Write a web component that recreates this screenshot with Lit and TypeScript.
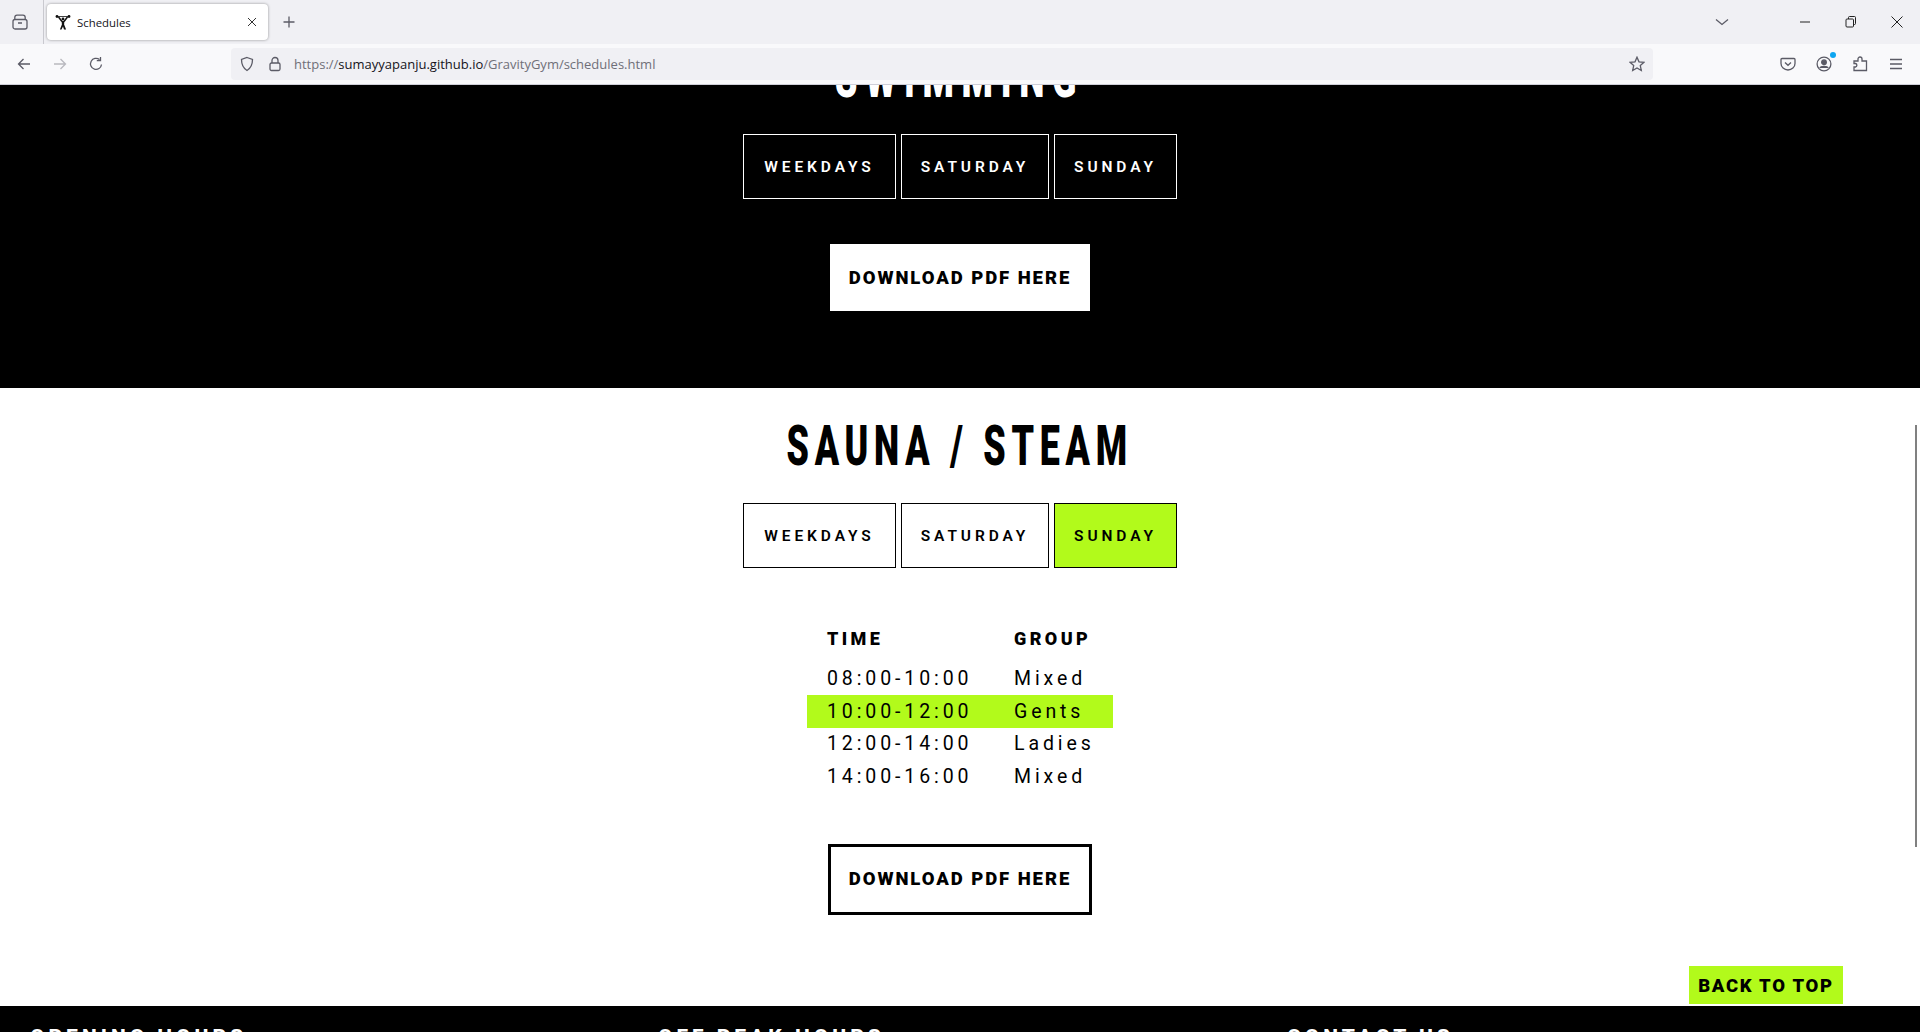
import { LitElement, html, css, svg } from "lit";
import { customElement } from "lit/decorators.js";

const ic = (w: number, body: unknown) => html`<svg width=${w} height=${w} viewBox="0 0 16 16" fill="none" stroke="#5b5b66" stroke-width="1.3">${body}</svg>`;
const win = (body: unknown) => html`<svg width="16" height="16" viewBox="0 0 16 16" stroke="#222" fill="none">${body}</svg>`;

@customElement("tab-group")
class TabGroup extends LitElement {
  static properties = { active: { type: String } };
  active = "";
  static styles = css`
    :host { display: flex; justify-content: center; gap: 5px; }
    .b { box-sizing: border-box; height: 65px; padding-top: 1px; display: flex; align-items: center; justify-content: center;
      border: 1px solid #000; font: 600 15.5px "Roboto", sans-serif; letter-spacing: 3.9px; color: #000; }
    :host([dark]) .b { border-color: #fff; color: #fff; }
    .on { background: #b2fa1b; }
  `;
  render() {
    const items: [string, number][] = [["WEEKDAYS", 153], ["SATURDAY", 148], ["SUNDAY", 123]];
    return items.map(([t, w]) => html`<div class="b ${this.active === t ? "on" : ""}" style="width:${w}px">${t}</div>`);
  }
}

@customElement("app-root")
class AppRoot extends LitElement {
  static styles = css`
    :host { display: block; width: 1920px; height: 1032px; overflow: hidden; position: relative; font-family: "Roboto", sans-serif; background: #fff; }
    svg { display: block; flex: none; }
    .tabbar { height: 44px; background: #f0f0f4; display: flex; align-items: center; }
    .side { width: 40px; padding-right: 3px; height: 44px; display: flex; justify-content: center; align-items: center; border-right: 1px solid #c9c9cf; }
    .tab { box-sizing: border-box; width: 221px; height: 36px; margin-left: 3px; background: #fff; border-radius: 4px; box-shadow: 0 0 3px rgba(0,0,0,.4);
      display: flex; align-items: center; padding: 0 8px; font: 11.4px "Open Sans", sans-serif; color: #15141a; }
    .tab span { margin-left: 6px; flex: 1; }
    .plus { margin-left: 13px; }
    .winctl { margin-left: auto; display: flex; align-items: center; }
    .chev { margin-right: 52px; }
    .wbtn { width: 46px; display: flex; justify-content: center; }
    .toolbar { height: 40px; background: #f9f9fb; display: flex; align-items: center; border-bottom: 1px solid #cfcfd8; }
    .nav { display: flex; gap: 20px; padding-left: 16px; width: 231px; box-sizing: border-box; }
    .fwd { opacity: .4; }
    .url { width: 1422px; height: 32px; background: #f0f0f4; border-radius: 4px; display: flex; align-items: center; padding: 0 8px; box-sizing: border-box; gap: 12px; }
    .addr { font: 13px "Open Sans", sans-serif; color: #6f6f78; margin-left: -1px; flex: 1; white-space: nowrap; }
    .addr b { font-weight: 400; color: #15141a; }
    .tools { display: flex; align-items: center; margin-left: 117px; }
    .tool { width: 36px; display: flex; justify-content: center; position: relative; }
    .dot { position: absolute; left: 24px; top: -4px; width: 6px; height: 6px; border-radius: 50%; background: #0da5f0; }
    .page { height: 947px; overflow: hidden; position: relative; }
    .black { background: #000; height: 303px; display: flex; flex-direction: column; align-items: center; }
    .h { font-weight: 900; font-size: 56px; letter-spacing: 9px; line-height: 64px; margin: 0; text-align: center; transform: scaleX(.64); white-space: nowrap; }
    .swim { color: #fff; margin-top: -39px; margin-bottom: -1px; letter-spacing: 12px; }
    .black tab-group { margin-top: 25px; }
    .pdf { box-sizing: border-box; display: flex; align-items: center; justify-content: center; font: 900 18.5px "Roboto", sans-serif; letter-spacing: 1.93px; color: #000; }
    .pdf-w { background: #fff; width: 260px; height: 67px; margin-top: 45px; }
    .white { display: flex; flex-direction: column; align-items: center; height: 618px; }
    .title { margin-top: 26px; }
    .white tab-group { margin-top: 25px; }
    .tbl { width: 306px; margin-top: 51px; font-size: 19.5px; letter-spacing: 3.9px; color: #000; }
    .row { display: grid; grid-template-columns: 187px 1fr; padding-left: 20px; height: 32.7px; align-items: center; }
    .hd { font-weight: 900; font-size: 18px; letter-spacing: 3.4px; height: 38px; margin-bottom: 5.2px; }
    .hl { background: #b2fa1b; }
    .pdf-b { border: 3px solid #000; width: 264px; height: 71px; margin-top: 51px; background: #fff; }
    .footer { height: 60px; background: #000; color: #fff; font-weight: 800; font-size: 21px; letter-spacing: 4px; display: grid; grid-template-columns: 628px 629px 1fr; padding-left: 30px; }
    .footer div { padding-top: 19px; }
    .top { position: absolute; left: 1689px; top: 881px; width: 154px; height: 38px; padding-top: 1px; box-sizing: border-box; background: #b2fa1b; color: #000; font: 900 18.5px "Roboto", sans-serif; letter-spacing: 1.7px; display: flex; align-items: center; justify-content: center; }
    .scroll { position: absolute; right: 3px; top: 340px; width: 2px; height: 422px; background: #808080; }
  `;
  render() {
    const rows = [["08:00-10:00", "Mixed"], ["10:00-12:00", "Gents"], ["12:00-14:00", "Ladies"], ["14:00-16:00", "Mixed"]];
    return html`
      <div class="tabbar">
        <div class="side">${ic(16, svg`<rect x="1" y="5.500" width="14" height="9.500" rx="2"/><path d="M2.800 5.500V3.500Q2.800 1.200 5 1.200H11Q13.200 1.200 13.200 3.500V5.500M6 9h4"/>`)}</div>
        <div class="tab">
          <svg width="16" height="16" viewBox="0 0 16 16" fill="#111"><path d="M2 2.500H14" stroke="#111" stroke-width=".8"/><circle cx="2" cy="2.500" r="1.400"/><circle cx="14" cy="2.500" r="1.400"/><path d="M3.500 3 7 7.500M12.500 3 9 7.500" stroke="#111" stroke-width="1.500" fill="none"/><circle cx="8" cy="5" r="1.400"/><path d="M6.600 7h2.800l-.3 3.500 2 5H9L8 12.500l-1.500 3H4.900l2-5z"/></svg>
          <span>Schedules</span>
          ${ic(16, svg`<path d="M4 4l8 8M12 4l-8 8" stroke-width="1" stroke="#333"/>`)}
        </div>
        <div class="plus">${ic(16, svg`<path d="M8 2.500v11M2.500 8h11"/>`)}</div>
        <div class="winctl">
          <div class="chev">${ic(16, svg`<path d="M2 5.500 8 10.500 14 5.500"/>`)}</div>
          <div class="wbtn">${win(svg`<path d="M3 8h10"/>`)}</div>
          <div class="wbtn">${win(svg`<rect x="3" y="5" width="7.500" height="8" rx="1"/><path d="M5.500 5V3.500a1 1 0 0 1 1-1h5a1 1 0 0 1 1 1v6a1 1 0 0 1-1 1h-1"/>`)}</div>
          <div class="wbtn">${win(svg`<path d="M2.500 2.500l11 11M13.500 2.500l-11 11"/>`)}</div>
        </div>
      </div>
      <div class="toolbar">
        <div class="nav">
          ${ic(16, svg`<path d="M14 8H2.500M7.500 3 2.500 8l5 5"/>`)}
          <div class="fwd">${ic(16, svg`<path d="M2 8h11.500M8.500 3l5 5-5 5"/>`)}</div>
          ${ic(16, svg`<path d="M13.500 8.500A5.500 5.500 0 1 1 11.500 3.600M12.500 1v3.700H8.800"/>`)}
        </div>
        <div class="url">
          ${ic(16, svg`<path d="M8 1.500 13.500 3.500c0 5-1.500 8.500-5.500 11-4-2.500-5.500-6-5.500-11z"/>`)}
          ${ic(16, svg`<rect x="3" y="7" width="10" height="7.500" rx="1.500"/><path d="M5 7V4.500a3 3 0 0 1 6 0V7"/>`)}
          <div class="addr">https://<b>sumayyapanju.github.io</b>/GravityGym/schedules.html</div>
          ${ic(16, svg`<path d="M8 1.200 10 5.800l5 .5-3.700 3.300 1 4.900L8 12l-4.300 2.500 1-4.900L1 6.300l5-.5z"/>`)}
        </div>
        <div class="tools">
          <div class="tool">${ic(16, svg`<path d="M2 2.500h12a1 1 0 0 1 1 1v4a7 6.500 0 0 1-14 0v-4a1 1 0 0 1 1-1z"/><path d="M5 6.500l3 2.800 3-2.800"/>`)}</div>
          <div class="tool">${ic(16, svg`<circle cx="8" cy="8" r="6.900"/><circle cx="8" cy="6.200" r="2.300" fill="#5b5b66"/><path d="M3.800 12c1-2.300 7.400-2.300 8.400 0" fill="#5b5b66"/>`)}<i class="dot"></i></div>
          <div class="tool">${ic(16, svg`<path d="M6 3a2 2 0 0 1 4 0V5h4.500v9.500H2V11h1.500a1.800 1.800 0 0 0 0-3.500H2V5h4z"/>`)}</div>
          <div class="tool">${ic(16, svg`<path d="M2 3.500h12M2 8h12M2 12.500h12"/>`)}</div>
        </div>
      </div>
      <div class="page">
        <section class="black">
          <div class="h swim">SWIMMING</div>
          <tab-group dark></tab-group>
          <div class="pdf pdf-w">DOWNLOAD PDF HERE</div>
        </section>
        <section class="white">
          <h1 class="h title">SAUNA / STEAM</h1>
          <tab-group active="SUNDAY"></tab-group>
          <div class="tbl">
            <div class="row hd"><span>TIME</span><span>GROUP</span></div>
            ${rows.map(([a, b], i) => html`<div class="row ${i === 1 ? "hl" : ""}"><span>${a}</span><span>${b}</span></div>`)}
          </div>
          <div class="pdf pdf-b">DOWNLOAD PDF HERE</div>
        </section>
        <footer class="footer"><div>OPENING HOURS</div><div>OFF PEAK HOURS</div><div>CONTACT US</div></footer>
        <div class="top">BACK TO TOP</div>
        <div class="scroll"></div>
      </div>
    `;
  }
}
